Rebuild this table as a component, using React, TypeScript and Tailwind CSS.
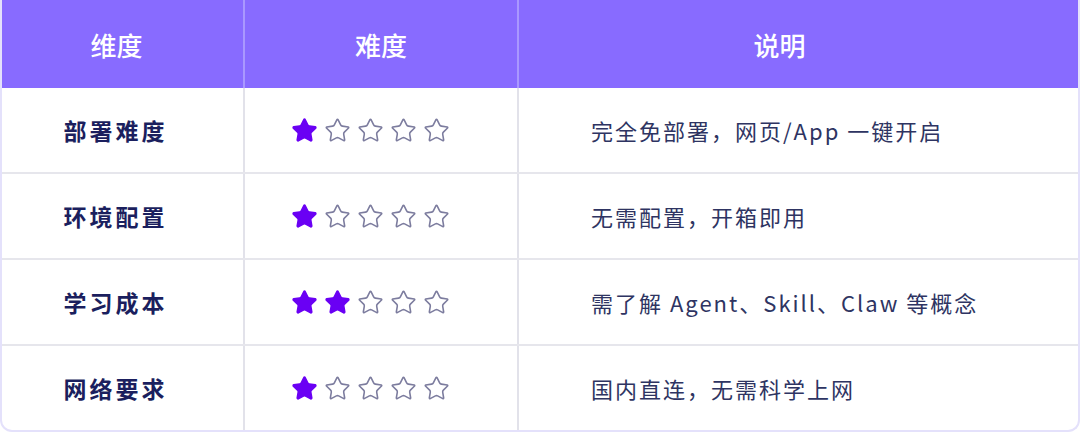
const rows = [
  { name: "部署难度", stars: 1, note: "完全免部署，网页/App 一键开启" },
  { name: "环境配置", stars: 1, note: "无需配置，开箱即用" },
  { name: "学习成本", stars: 2, note: "需了解 Agent、Skill、Claw 等概念" },
  { name: "网络要求", stars: 1, note: "国内直连，无需科学上网" },
];

function Star({ filled }: { filled: boolean }) {
  return (
    <svg
      width="27"
      height="27"
      viewBox="0 0 24 24"
      fill={filled ? "#6a00f4" : "none"}
      stroke={filled ? "#6a00f4" : "#7c7c9e"}
      strokeWidth={filled ? 1.6 : 1.4}
      strokeLinejoin="round"
    >
      <path d="M11.525 2.295a.53.53 0 0 1 .95 0l2.31 4.679a2.123 2.123 0 0 0 1.595 1.16l5.166.756a.53.53 0 0 1 .294.904l-3.736 3.638a2.123 2.123 0 0 0-.611 1.878l.882 5.14a.53.53 0 0 1-.771.56l-4.618-2.428a2.122 2.122 0 0 0-1.973 0L6.396 21.01a.53.53 0 0 1-.77-.56l.881-5.139a2.122 2.122 0 0 0-.611-1.879L2.16 9.795a.53.53 0 0 1 .294-.906l5.165-.755a2.122 2.122 0 0 0 1.597-1.16z" />
    </svg>
  );
}

export default function App() {
  return (
    <div
      className="w-[1080px] h-[433px] bg-white"
      style={{ fontFamily: '"Noto Sans CJK SC", "Noto Sans", sans-serif' }}
    >
      <div className="h-[432px] border-2 border-t-0 border-[#e4e1fb] rounded-b-[12px] overflow-hidden flex flex-col">
        <div className="h-[88px] bg-[#886bff] flex text-white text-[26px] font-medium">
          <div className="w-[243px] flex items-center justify-center pr-[12px] border-r-2 border-[#a998ff]">维度</div>
          <div className="w-[274px] flex items-center justify-center border-r-2 border-[#a998ff]">难度</div>
          <div className="flex-1 flex items-center justify-center pr-[38px]">说明</div>
        </div>
        {rows.map((r, i) => (
          <div
            key={r.name}
            className={`flex flex-1 ${i > 0 ? "border-t-2 border-[#e6e6ec]" : ""}`}
          >
            <div className="w-[243px] flex items-center justify-center border-r-2 border-[#e2e2ea] text-[23px] font-bold text-[#1b1f5e] tracking-[3px] pr-[14px]">
              {r.name}
            </div>
            <div className="w-[274px] flex items-center gap-[6px] pl-[46px] border-r-2 border-[#e2e2ea]">
              {[0, 1, 2, 3, 4].map((k) => (
                <Star key={k} filled={k < r.stars} />
              ))}
            </div>
            <div className="flex-1 flex items-center pl-[72px] text-[22px] text-[#2e3462] tracking-[2px]">
              {r.note}
            </div>
          </div>
        ))}
      </div>
    </div>
  );
}
